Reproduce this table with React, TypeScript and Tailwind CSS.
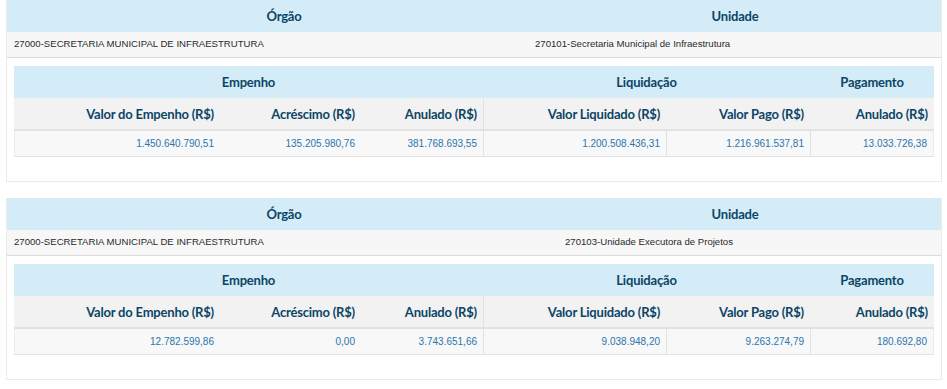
const head = "font-['Lato',sans-serif] font-bold text-[13px] tracking-[-0.2px] text-[#0c4566]";
const num = "font-['Liberation_Sans',Arial,sans-serif] text-[10px] text-[#2a76ad]";

type Bloco = {
  orgao: string;
  unidade: string;
  unidadeClass: string;
  valores: string[];
};

const blocos: Bloco[] = [
  {
    orgao: "27000-SECRETARIA MUNICIPAL DE INFRAESTRUTURA",
    unidade: "270101-Secretaria Municipal de Infraestrutura",
    unidadeClass: "pl-[528px]",
    valores: [
      "1.450.640.790,51",
      "135.205.980,76",
      "381.768.693,55",
      "1.200.508.436,31",
      "1.216.961.537,81",
      "13.033.726,38",
    ],
  },
  {
    orgao: "27000-SECRETARIA MUNICIPAL DE INFRAESTRUTURA",
    unidade: "270103-Unidade Executora de Projetos",
    unidadeClass: "pl-[558px]",
    valores: [
      "12.782.599,86",
      "0,00",
      "3.743.651,66",
      "9.038.948,20",
      "9.263.274,79",
      "180.692,80",
    ],
  },
];

const colunas = [
  "Valor do Empenho (R$)",
  "Acréscimo (R$)",
  "Anulado (R$)",
  "Valor Liquidado (R$)",
  "Valor Pago (R$)",
  "Anulado (R$)",
];

function Card({ bloco }: { bloco: Bloco }) {
  return (
    <div className="border border-t-0 border-[#ebebeb] bg-white pb-[24px]">
      <div className="flex h-[32px] items-center bg-[#d3ecf7] pt-[2px]">
        <div className={`w-[554px] text-center ${head}`}>Órgão</div>
        <div className={`w-[348px] text-center ${head}`}>Unidade</div>
      </div>
      <div className="relative flex h-[26px] items-center border-b border-[#dcdcdc] bg-[#f7f7f7] font-['Liberation_Sans',Arial,sans-serif] text-[9.6px] text-[#2a2a2a]">
        <div className="pl-[7px]">{bloco.orgao}</div>
        <div className={`absolute left-0 ${bloco.unidadeClass}`}>{bloco.unidade}</div>
      </div>
      <div className="mx-[7px] mt-[8px] grid grid-cols-[206px_141px_122px_183px_144px_124px]">
        <div className={`col-span-3 flex h-[32px] items-center justify-center bg-[#d3ecf7] pt-[2px] ${head}`}>
          Empenho
        </div>
        <div className={`col-span-2 flex h-[32px] items-center justify-center bg-[#d3ecf7] pt-[2px] ${head}`}>
          Liquidação
        </div>
        <div className={`flex h-[32px] items-center justify-center bg-[#d3ecf7] pt-[2px] ${head}`}>
          Pagamento
        </div>
        {colunas.map((c, i) => (
          <div
            key={i}
            className={`flex h-[33px] items-center justify-end border-b-2 border-[#e2e2e2] bg-[#f2f2f2] pr-[6px] pt-[2px] ${head} ${
              i === 3 ? "border-l border-l-[#e2e2e2]" : ""
            }`}
          >
            {c}
          </div>
        ))}
        {bloco.valores.map((v, i) => (
          <div
            key={i}
            className={`flex h-[26px] items-center justify-end border-b border-[#e2e2e2] bg-[#f8f8f8] pr-[6px] ${num} ${
              i >= 3 ? "border-l border-l-[#e2e2e2]" : ""
            } ${i === 0 ? "border-l border-l-[#ececec]" : ""} ${i === 5 ? "border-r border-r-[#ececec]" : ""}`}
          >
            {v}
          </div>
        ))}
      </div>
    </div>
  );
}

export default function App() {
  return (
    <div className="min-h-[389px] bg-white pl-[6px] pr-[5px]">
      <div className="flex flex-col gap-[16px]">
        {blocos.map((b, i) => (
          <Card key={i} bloco={b} />
        ))}
      </div>
    </div>
  );
}
